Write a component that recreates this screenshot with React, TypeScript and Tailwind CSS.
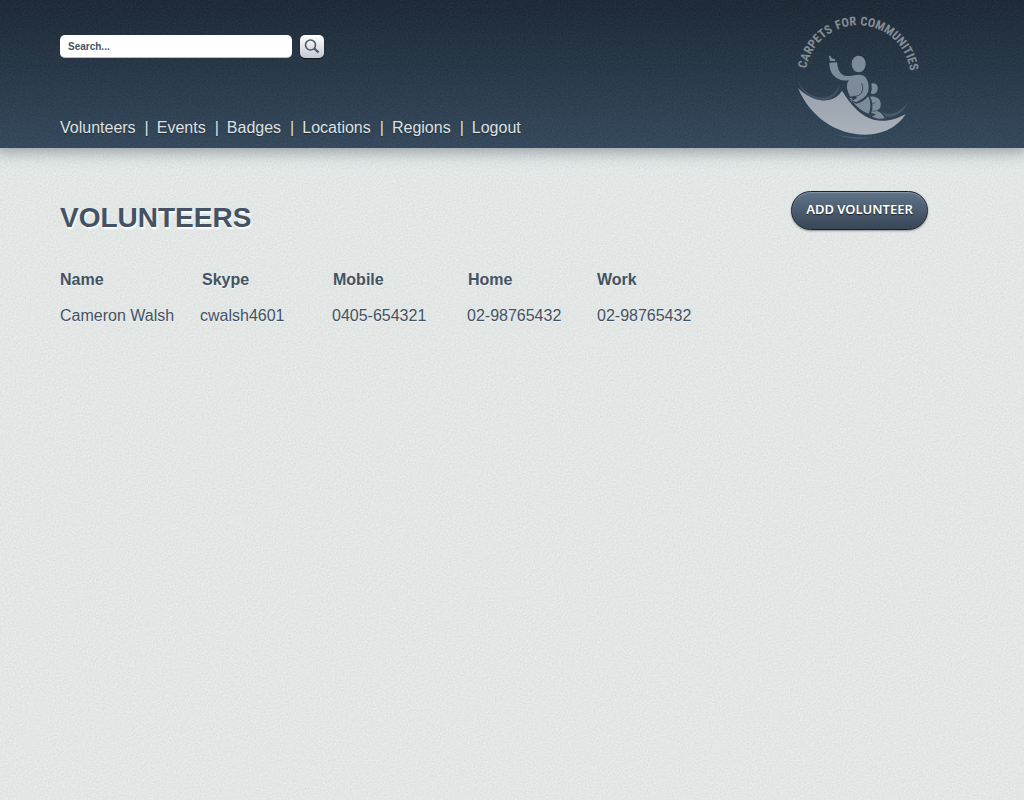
import React from "react";

const links = ["Volunteers", "Events", "Badges", "Locations", "Regions", "Logout"];

const volunteers = [
  { name: "Cameron Walsh", skype: "cwalsh4601", mobile: "0405-654321", home: "02-98765432", work: "02-98765432" },
];

function Grain({ id, className }: { id: string; className: string }) {
  return (
    <svg aria-hidden="true" className={`pointer-events-none absolute inset-0 h-full w-full ${className}`}>
      <filter id={id} x="0" y="0" width="100%" height="100%" colorInterpolationFilters="sRGB">
        <feTurbulence type="fractalNoise" baseFrequency="0.6" numOctaves="2" stitchTiles="stitch" />
        <feColorMatrix
          type="matrix"
          values="1.2 1.2 0 0 -0.7  1.2 1.2 0 0 -0.7  1.2 1.2 0 0 -0.7  0 0 0 0 1"
        />
      </filter>
      <rect width="100%" height="100%" filter={`url(#${id})`} />
    </svg>
  );
}

function Logo() {
  return (
    <svg viewBox="45 36 378 384" className="h-32 w-[126px] shrink-0" role="img" aria-label="Carpets for Communities">
      <defs>
        <path id="arc" d="M76 234 A158 158 0 0 1 392 234" />
        <linearGradient id="carpet" x1="0" y1="0" x2="0" y2="1">
          <stop offset="0" stopColor="#98a1ab" />
          <stop offset="1" stopColor="#a9b1bb" />
        </linearGradient>
      </defs>
      <g fill="#848d97" textAnchor="middle" className="font-['Liberation_Sans_Narrow','Roboto_Condensed','Liberation_Sans',sans-serif] text-[37px] font-bold">
        <text>
          <textPath href="#arc" startOffset="20%">CARPETS</textPath>
        </text>
        <text>
          <textPath href="#arc" startOffset="43%">FOR</textPath>
        </text>
        <text>
          <textPath href="#arc" startOffset="73.5%">COMMUNITIES</textPath>
        </text>
      </g>
      <path fill="url(#carpet)" d="M54 264 C80 291 118 306 145 300 C165 296 177 286 186 272 C202 298 225 330 256 349 C293 371 341 364 377 342 C356 378 311 404 255 404 C168 404 90 350 54 264Z" />
      <g fill="#7d8a98">
        <ellipse cx="236" cy="192" rx="21" ry="25" />
        <path d="M148 188 L171 187 C173 205 178 220 190 226 C203 232 220 224 240 224 C259 225 267 245 266 265 C265 283 256 292 242 299 L229 307 L216 302 L231 294 L225 287 L211 290 C204 277 198 264 202 249 L207 241 C187 244 170 237 159 224 C151 214 148 203 148 188Z" />
        <path d="M150 183 L147 170 C147 166 151 166 153 171 L155 175 L165 178 L166 183Z" />
        <path d="M207 292 L219 297 L210 302 L229 311 C245 308 257 299 264 289 C273 302 273 325 266 341 C244 335 224 315 207 292Z" />
        <path d="M274 251 C286 246 295 256 293 268 C292 279 281 286 272 280 C276 270 276 261 274 251Z" />
        <path d="M270 290 C286 288 300 294 302 309 C304 320 299 328 291 333 C302 336 310 344 314 355 C302 358 287 355 276 350 L288 343 L274 339 C280 323 278 304 270 290Z" />
      </g>
      <path d="M245 250 C252 266 247 280 235 287 L222 290" fill="none" stroke="#33465a" strokeWidth="3" />
      <path d="M271 307 C277 312 282 310 287 307 M274 332 C283 335 291 333 297 328" fill="none" stroke="#33465a" strokeWidth="2" />
      <path fill="#4c5f73" d="M52 239 C70 276 101 295 132 292 C155 290 170 274 180 252 C178 277 160 299 131 301 C93 303 62 275 52 239Z" opacity="0.6" />
      <path fill="#4c5f73" d="M305 335 C327 350 361 337 383 308 C370 337 347 353 317 350Z" opacity="0.8" />
      <path fill="#4c5f73" d="M168 403 C204 419 247 419 282 412 C244 414 204 413 168 403Z" />
    </svg>
  );
}

export default function App() {
  return (
    <div className="relative flex min-h-screen flex-col overflow-x-clip bg-[#e8edec] font-['Liberation_Sans',Arial,sans-serif] text-base text-[#445263]">
      <Grain id="paper" className="opacity-[0.05]" />
      <header className="relative bg-linear-to-b from-[#1b2734] to-[#33485c] shadow-[0_0_14px_4px_rgba(40,55,72,0.42)]">
        <Grain id="cloth" className="opacity-[0.04]" />
        <div className="relative flex h-[148px] items-start justify-between pr-[103px] pl-[60px]">
          <div className="flex h-full flex-col justify-between pt-[35px] pb-2">
            <form className="flex gap-2" role="search" onSubmit={(e) => e.preventDefault()}>
              <input
                type="text"
                aria-label="Search"
                placeholder="Search..."
                className="h-[23px] w-[232px] rounded-[5px] border-b border-[#b9bec4] bg-white px-2 text-[10px] font-bold text-[#445263] placeholder:text-[#445263] placeholder:opacity-100"
              />
              <button
                type="submit"
                aria-label="Search"
                className="flex h-[23px] w-6 items-center justify-center rounded-[5px] bg-linear-to-b from-white to-[#c5c9d0] shadow-[0_1px_1px_rgba(0,0,0,0.6)]"
              >
                <svg viewBox="0 0 16 16" className="h-4 w-4" fill="none" stroke="#4a586a">
                  <circle cx="6.5" cy="6" r="5" strokeWidth="1.6" />
                  <path d="M10.3 9.5 L14.5 13.5" strokeWidth="2.4" />
                </svg>
              </button>
            </form>
            <nav className="flex gap-2 leading-6 text-[#dfe2e2] [text-shadow:0_1px_1px_rgba(0,0,0,0.35)]">
              {links.map((link, i) => (
                <React.Fragment key={link}>
                  {i > 0 && <span aria-hidden="true" className="pl-px">|</span>}
                  <a href="#">{link}</a>
                </React.Fragment>
              ))}
            </nav>
          </div>
          <div className="pt-3">
            <Logo />
          </div>
        </div>
      </header>
      <main className="relative pr-24 pl-[60px] [text-shadow:0_1px_0_rgba(255,255,255,0.5)]">
        <div className="flex items-start justify-between pt-[43px]">
          <h1 className="pt-[11px] text-[28px] leading-8 font-bold [text-shadow:1px_2px_2px_#ffffff]">VOLUNTEERS</h1>
          <button
            type="button"
            className="h-[39px] w-[137px] rounded-full border border-[#1b222b] bg-linear-to-b from-[#5f7489] to-[#384656] pb-0.5 font-['Noto_Sans','Open_Sans',sans-serif] text-[13px] font-semibold text-white shadow-[inset_0_1px_1px_rgba(255,255,255,0.25),0_1px_2px_rgba(0,0,0,0.4)] [text-shadow:0_1px_1px_rgba(0,0,0,0.6)]"
          >
            ADD VOLUNTEER
          </button>
        </div>
        <table className="mt-[34px] w-[667px] table-fixed text-left leading-6">
          <colgroup>
            <col className="w-[140px]" />
            <col className="w-[132px]" />
            <col className="w-[135px]" />
            <col className="w-[130px]" />
            <col />
          </colgroup>
          <thead>
            <tr>
              <th className="pb-3">Name</th>
              <th className="pb-3 pl-0.5">Skype</th>
              <th className="pb-3 pl-px">Mobile</th>
              <th className="pb-3 pl-px">Home</th>
              <th className="pb-3">Work</th>
            </tr>
          </thead>
          <tbody>
            {volunteers.map((v) => (
              <tr key={v.name}>
                <td>{v.name}</td>
                <td>{v.skype}</td>
                <td>{v.mobile}</td>
                <td>{v.home}</td>
                <td>{v.work}</td>
              </tr>
            ))}
          </tbody>
        </table>
      </main>
    </div>
  );
}
